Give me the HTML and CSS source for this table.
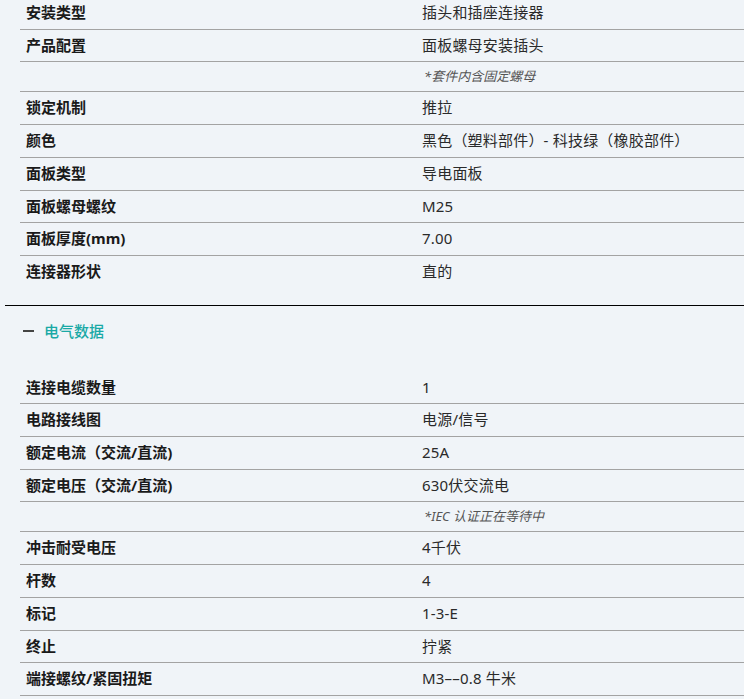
FILE: index.html
```html
<!DOCTYPE html>
<html lang="zh-CN">
<head>
<meta charset="utf-8">
<link rel="stylesheet" href="styles.css">
</head>
<body>
<div class="page">
  <div class="spec">
    <div class="row"><div class="label">安装类型</div><div class="value">插头和插座连接器</div></div>
    <div class="row"><div class="label">产品配置</div><div class="value">面板螺母安装插头</div></div>
    <div class="row note"><div class="label"></div><div class="value">*套件内含固定螺母</div></div>
    <div class="row"><div class="label">锁定机制</div><div class="value">推拉</div></div>
    <div class="row"><div class="label">颜色</div><div class="value">黑色（塑料部件）- 科技绿（橡胶部件）</div></div>
    <div class="row"><div class="label">面板类型</div><div class="value">导电面板</div></div>
    <div class="row"><div class="label">面板螺母螺纹</div><div class="value">M25</div></div>
    <div class="row"><div class="label">面板厚度(mm)</div><div class="value">7.00</div></div>
    <div class="row last"><div class="label">连接器形状</div><div class="value">直的</div></div>
  </div>

  <div class="section">
    <div class="section-head">
      <span class="minus"></span>
      <span class="section-title">电气数据</span>
    </div>
    <div class="spec">
      <div class="row"><div class="label">连接电缆数量</div><div class="value">1</div></div>
      <div class="row"><div class="label">电路接线图</div><div class="value">电源/信号</div></div>
      <div class="row"><div class="label">额定电流（交流/直流)</div><div class="value">25A</div></div>
      <div class="row"><div class="label">额定电压（交流/直流)</div><div class="value">630伏交流电</div></div>
      <div class="row note"><div class="label"></div><div class="value">*IEC 认证正在等待中</div></div>
      <div class="row"><div class="label">冲击耐受电压</div><div class="value">4千伏</div></div>
      <div class="row"><div class="label">杆数</div><div class="value">4</div></div>
      <div class="row"><div class="label">标记</div><div class="value">1-3-E</div></div>
      <div class="row"><div class="label">终止</div><div class="value">拧紧</div></div>
      <div class="row"><div class="label">端接螺纹/紧固扭矩</div><div class="value">M3––0.8 牛米</div></div>
    </div>
  </div>
</div>
</body>
</html>
```
FILE: styles.css
```css
html, body {
  margin: 0;
  padding: 0;
  background: #f0f4f8;
  overflow: hidden;
}
body {
  font-family: "Noto Sans", "Noto Sans CJK SC", sans-serif;
  color: #222;
}
.page {
  margin-top: -3px;
}
.spec {
  margin-left: 20px;
}
.row {
  display: grid;
  grid-template-columns: 396px 1fr;
  padding: 7px 0;
  border-bottom: 1px solid #a3a3a3;
  font-size: 15px;
  line-height: 17.7px;
}
.row.last {
  border-bottom: none;
}
.label {
  padding-left: 6px;
  font-weight: 700;
  color: #1a1a1a;
  white-space: nowrap;
}
.value {
  padding-left: 6px;
  color: #2a2a2a;
  white-space: nowrap;
  letter-spacing: 0.2px;
}
.row.note {
  font-size: 13px;
  line-height: 15px;
}
.row.note .value {
  font-style: italic;
  color: #555;
  padding-left: 8px;
  letter-spacing: 0;
}
.section {
  margin-top: 17px;
  margin-left: 5px;
  border-top: 1px solid #000;
}
.section .spec {
  margin-left: 15px;
}
.section-head {
  display: flex;
  align-items: center;
  padding: 16px 0 32px 18px;
  line-height: 18px;
}
.minus {
  width: 11px;
  height: 2px;
  background: #444;
  margin-right: 10px;
}
.section-title {
  font-size: 15px;
  font-weight: 500;
  color: #19a9a6;
}
```
